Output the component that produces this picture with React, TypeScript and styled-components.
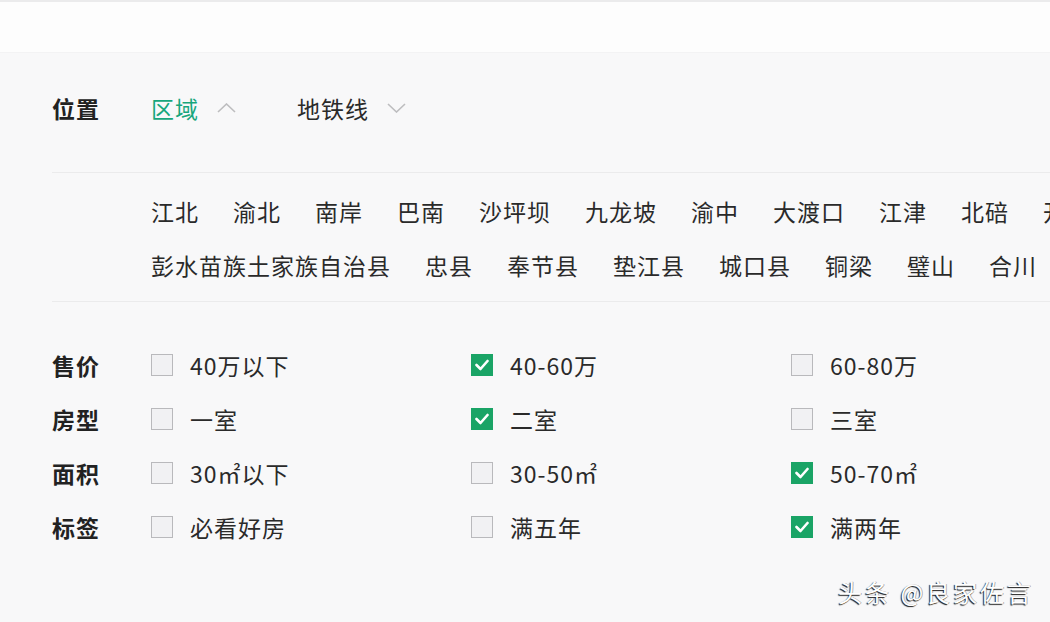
import React from "react";
import styled, { createGlobalStyle } from "styled-components";

const GlobalStyle = createGlobalStyle`
  html, body {
    margin: 0;
    padding: 0;
    background: #f8f8f9;
    overflow: hidden;
  }
  body {
    font-family: "Noto Sans CJK SC", "Noto Sans", sans-serif;
    color: #2a2a2a;
  }
`;

const Page = styled.div`
  position: relative;
  width: 1050px;
  height: 622px;
  overflow: hidden;
  background: #f8f8f9;
`;

const TopBar = styled.div`
  height: 50px;
  background: #fdfdfd;
  border-top: 2px solid #ebebec;
  border-bottom: 1px solid #f3f3f4;
`;

const Panel = styled.div`
  padding-left: 52px;
`;

const LocationRow = styled.div`
  display: flex;
  align-items: center;
  height: 110px;
  padding-bottom: 9px;
`;

const Label = styled.div`
  width: 99px;
  flex-shrink: 0;
  font-size: 23px;
  font-weight: 700;
  letter-spacing: 1px;
  color: #222;
`;

const Tab = styled.div<{ $active?: boolean }>`
  display: flex;
  align-items: center;
  gap: 18px;
  margin-right: 61px;
  font-size: 23px;
  letter-spacing: 1px;
  color: ${(p) => (p.$active ? "#17a67c" : "#2a2a2a")};
`;

const Divider = styled.div`
  height: 1px;
  background: #ebebec;
`;

const DistrictList = styled.div`
  padding: 11px 0 9px 99px;
`;

const DistrictRow = styled.div`
  display: flex;
  gap: 34px;
  white-space: nowrap;
  line-height: 54px;
`;

const District = styled.span`
  flex-shrink: 0;
  font-size: 23px;
  letter-spacing: 1px;
  color: #2a2a2a;
`;

const FilterList = styled.div`
  padding-top: 36px;
`;

const FilterRow = styled.div`
  display: flex;
  align-items: center;
  height: 54px;
`;

const Option = styled.label`
  display: flex;
  align-items: center;
  flex-shrink: 0;
  gap: 17px;
  width: 320px;
  font-size: 23px;
  letter-spacing: 1px;
  color: #2a2a2a;
`;

const Box = styled.span<{ $checked?: boolean }>`
  display: flex;
  align-items: center;
  justify-content: center;
  box-sizing: border-box;
  width: 22px;
  height: 22px;
  background: ${(p) => (p.$checked ? "#1aa466" : "#f1f1f3")};
  border: 1px solid ${(p) => (p.$checked ? "#1aa466" : "#b9b9bc")};
`;

const Watermark = styled.div`
  position: absolute;
  left: 838px;
  top: 574px;
  font-size: 24px;
  letter-spacing: 3px;
  color: #ffffff;
  text-shadow: -1px 1px 1px rgba(0, 0, 0, 0.9), 1px 0 0 rgba(0, 0, 0, 0.3);
`;

const Chevron = ({ up }: { up?: boolean }) => (
  <svg width="19" height="10" viewBox="0 0 19 10">
    <polyline
      points={up ? "1,9 9.5,1 18,9" : "1,1 9.5,9 18,1"}
      fill="none"
      stroke="#bdbdbf"
      strokeWidth="1.6"
    />
  </svg>
);

const Check = () => (
  <svg width="14" height="12" viewBox="0 0 14 12">
    <polyline
      points="1.5,6 5.5,10 12.5,2"
      fill="none"
      stroke="#ffffff"
      strokeWidth="2.6"
      strokeLinecap="round"
      strokeLinejoin="round"
    />
  </svg>
);

const districtRows = [
  ["江北", "渝北", "南岸", "巴南", "沙坪坝", "九龙坡", "渝中", "大渡口", "江津", "北碚", "开州", "万州"],
  ["彭水苗族土家族自治县", "忠县", "奉节县", "垫江县", "城口县", "铜梁", "璧山", "合川"],
];

const filters = [
  { label: "售价", options: [["40万以下", false], ["40-60万", true], ["60-80万", false]] },
  { label: "房型", options: [["一室", false], ["二室", true], ["三室", false]] },
  { label: "面积", options: [["30㎡以下", false], ["30-50㎡", false], ["50-70㎡", true]] },
  { label: "标签", options: [["必看好房", false], ["满五年", false], ["满两年", true]] },
] as { label: string; options: [string, boolean][] }[];

export default function App() {
  return (
    <Page>
      <GlobalStyle />
      <TopBar />
      <Panel>
        <LocationRow>
          <Label>位置</Label>
          <Tab $active>
            区域 <Chevron up />
          </Tab>
          <Tab>
            地铁线 <Chevron />
          </Tab>
        </LocationRow>
        <Divider />
        <DistrictList>
          {districtRows.map((row, i) => (
            <DistrictRow key={i}>
              {row.map((d) => (
                <District key={d}>{d}</District>
              ))}
            </DistrictRow>
          ))}
        </DistrictList>
        <Divider />
        <FilterList>
          {filters.map((f) => (
            <FilterRow key={f.label}>
              <Label>{f.label}</Label>
              {f.options.map(([text, checked]) => (
                <Option key={text}>
                  <Box $checked={checked}>{checked && <Check />}</Box>
                  {text}
                </Option>
              ))}
            </FilterRow>
          ))}
        </FilterList>
      </Panel>
      <Watermark>头条 @良家佐言</Watermark>
    </Page>
  );
}
